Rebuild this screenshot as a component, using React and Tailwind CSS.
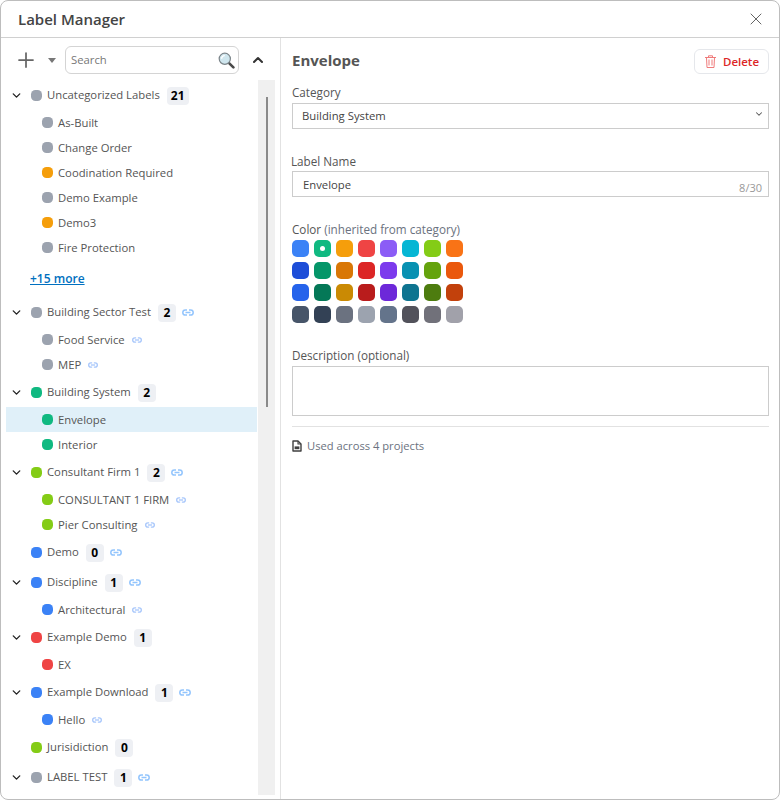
import { ChevronDown, ChevronUp, Plus, X } from "lucide-react";

const C = {
  gray: "bg-[#9ca3af]",
  amber: "bg-[#f59e0b]",
  green: "bg-[#10b981]",
  lime: "bg-[#84cc16]",
  blue: "bg-[#3b82f6]",
  red: "bg-[#ef4444]",
};

const swatches = [
  "bg-[#3b82f6]", "bg-[#10b981]", "bg-[#f59e0b]", "bg-[#ef4444]", "bg-[#8b5cf6]", "bg-[#06b6d4]", "bg-[#84cc16]", "bg-[#f97316]",
  "bg-[#1d4ed8]", "bg-[#059669]", "bg-[#d97706]", "bg-[#dc2626]", "bg-[#7c3aed]", "bg-[#0891b2]", "bg-[#65a30d]", "bg-[#ea580c]",
  "bg-[#2563eb]", "bg-[#047857]", "bg-[#ca8a04]", "bg-[#b91c1c]", "bg-[#6d28d9]", "bg-[#0e7490]", "bg-[#4d7c0f]", "bg-[#c2410c]",
  "bg-[#475569]", "bg-[#334155]", "bg-[#6b7280]", "bg-[#9ca3af]", "bg-[#64748b]", "bg-[#52525b]", "bg-[#71717a]", "bg-[#a1a1aa]",
];

function LinkIcon({ small }) {
  return (
    <svg
      width={small ? 10 : 12}
      height={small ? 6 : 7}
      viewBox="0 0 12 7"
      fill="none"
      stroke="currentColor"
      strokeWidth={small ? 1.6 : 1.5}
      className={`${small ? "ml-[7px] text-[#a9c8fb]" : "ml-[6px] text-[#93c5fd]"}`}
    >
      <path d="M5 .9H3.4a2.6 2.6 0 0 0 0 5.2H5" />
      <path d="M7 .9h1.6a2.6 2.6 0 0 1 0 5.2H7" />
      <path d="M3.5 3.5h5" />
    </svg>
  );
}

function Category({ color, name, count, linked, open = true }) {
  return (
    <div className="flex h-[30px] items-center pt-[1px]">
      <div className="flex w-[25px] pl-[4px]">
        {open && <ChevronDown size={13} strokeWidth={2.5} className="text-[#222]" />}
      </div>
      <span className={`h-[11px] w-[11px] rounded-[4.5px] ${color}`} />
      <span className="ml-[5px] text-[11.3px] text-[#555]">{name}</span>
      {count !== undefined && (
        <span className="ml-[7px] flex h-[18px] min-w-[18px] items-center justify-center rounded-[4px] bg-[#eef0f4] px-[4px] text-xs font-bold text-black">
          {count}
        </span>
      )}
      {linked && <LinkIcon />}
    </div>
  );
}

function Child({ color, name, linked, selected }) {
  return (
    <div className={`flex h-[25px] items-center pl-[36px] ${selected ? "bg-[#e0f0f9]" : ""}`}>
      <span className={`h-[11px] w-[11px] rounded-[4.5px] ${color}`} />
      <span className="ml-[5px] pt-[1px] text-[11.3px] text-[#555]">{name}</span>
      {linked && <LinkIcon small />}
    </div>
  );
}

function Tree() {
  return (
    <div className="w-[251px] shrink-0">
      <Category color={C.gray} name="Uncategorized Labels" count={21} />
      <Child color={C.gray} name="As-Built" />
      <Child color={C.gray} name="Change Order" />
      <Child color={C.amber} name="Coodination Required" />
      <Child color={C.gray} name="Demo Example" />
      <Child color={C.amber} name="Demo3" />
      <Child color={C.gray} name="Fire Protection" />
      <div className="flex h-[37px] items-center pl-[24px] text-xs font-semibold text-[#0070c0] underline">+15 more</div>
      <Category color={C.gray} name="Building Sector Test" count={2} linked />
      <Child color={C.gray} name="Food Service" linked />
      <Child color={C.gray} name="MEP" linked />
      <Category color={C.green} name="Building System" count={2} />
      <Child color={C.green} name="Envelope" selected />
      <Child color={C.green} name="Interior" />
      <Category color={C.lime} name="Consultant Firm 1" count={2} linked />
      <Child color={C.lime} name="CONSULTANT 1 FIRM" linked />
      <Child color={C.lime} name="Pier Consulting" linked />
      <Category color={C.blue} name="Demo" count={0} linked open={false} />
      <Category color={C.blue} name="Discipline" count={1} linked />
      <Child color={C.blue} name="Architectural" linked />
      <Category color={C.red} name="Example Demo" count={1} />
      <Child color={C.red} name="EX" />
      <Category color={C.blue} name="Example Download" count={1} linked />
      <Child color={C.blue} name="Hello" linked />
      <Category color={C.lime} name="Jurisidiction" count={0} open={false} />
      <Category color={C.gray} name="LABEL TEST" count={1} linked />
    </div>
  );
}

function SearchGlass() {
  return (
    <svg width="17" height="17" viewBox="0 0 17 17">
      <path d="M10.8 10.8L15.4 15.4" stroke="#4b4b4b" strokeWidth="2.6" strokeLinecap="round" />
      <circle cx="6.8" cy="6.8" r="5.6" fill="#cfe6ee" stroke="#7b8489" strokeWidth="1.2" />
      <path d="M3.6 6.8a3.2 3.2 0 0 1 3.2-3.2" fill="none" stroke="#fff" strokeWidth="1.4" />
    </svg>
  );
}

function TrashIcon() {
  return (
    <svg width="11" height="13" viewBox="0 0 11 13" fill="none" stroke="#ef7b7b" strokeWidth="1">
      <path d="M0 2.5h11M3.5 2.5V.8h4v1.7" />
      <path d="M1.5 2.5l.5 10h7l.5-10" />
      <path d="M4 4.5v6M7 4.5v6" />
    </svg>
  );
}

function DocIcon() {
  return (
    <svg width="10" height="12" viewBox="0 0 10 12" className="text-[#3f3f3f]">
      <path d="M1 1h5l3 3v7H1z" fill="#fff" stroke="currentColor" strokeWidth="1.4" strokeLinejoin="round" />
      <path d="M6 1v3h3" fill="none" stroke="currentColor" strokeWidth="1.1" />
      <path d="M2.6 6.4h4.8v2.8H2.6z" fill="currentColor" />
    </svg>
  );
}

function Field({ label, className, children }) {
  return (
    <div className={className}>
      <div className="-translate-y-px text-[11.7px] font-medium leading-[16px] text-[#555]">{label}</div>
      {children}
    </div>
  );
}

export default function App() {
  return (
    <div className="flex h-[800px] w-[780px] flex-col overflow-hidden rounded-[8px] border border-[#bdbdbd] bg-white font-['Open_Sans',sans-serif]">
      <div className="flex h-[37px] shrink-0 items-center justify-between border-b border-[#d0d0d0] pl-[17px] pr-[13px]">
        <h1 className="text-[15px] font-semibold text-[#444]">Label Manager</h1>
        <X size={20} strokeWidth={1} className="text-[#444]" />
      </div>
      <div className="flex min-h-0 flex-1">
        <div className="flex w-[280px] shrink-0 flex-col border-r border-[#e2e2e2]">
          <div className="flex h-[42px] shrink-0 items-center pl-[13px] pt-[2px]">
            <Plus size={24} strokeWidth={1.75} className="text-[#666]" />
            <span className="ml-[10px] h-0 w-0 border-x-[4px] border-t-[5px] border-x-transparent border-t-[#777]" />
            <div className="ml-[9px] flex h-[28px] w-[174px] items-center justify-between rounded-[6px] border border-[#d4d4d4] pl-[5px] pr-[3px]">
              <span className="pt-[1px] text-[11.3px] text-[#777]">Search</span>
              <SearchGlass />
            </div>
            <ChevronUp size={16} strokeWidth={3} className="ml-[11px] text-[#333]" />
          </div>
          <div className="flex min-h-0 flex-1 pb-[4px] pl-[5px]">
            <div className="h-full overflow-hidden">
              <Tree />
            </div>
            <div className="ml-[1px] h-full w-[17px] bg-[#f0f0f0] pl-[8px] pt-[17px]">
              <div className="h-[310px] w-[2px] bg-[#8a8a8a]" />
            </div>
          </div>
        </div>
        <div className="min-w-0 flex-1 pl-[11px] pr-[10px]">
          <div className="flex h-[47px] items-center justify-between">
            <h2 className="-mt-[3px] text-[15px] font-bold text-[#555]">Envelope</h2>
            <button className="flex h-[25px] w-[75px] items-center justify-center gap-[7px] rounded-[6px] border border-[#e5e7eb] pl-[1px] text-[11.5px] font-semibold text-[#dc2626]">
              <TrashIcon />
              <span className="pt-[1px]">Delete</span>
            </button>
          </div>
          <Field label="Category">
            <div className="relative mt-[2px]">
              <select className="block h-[26px] w-full appearance-none border border-[#ccc] bg-white pl-[9px] pt-[1px] text-[11.3px] text-[#444] outline-none">
                <option>Building System</option>
              </select>
              <ChevronDown size={10} strokeWidth={2.5} className="absolute right-[5px] top-[6px] text-[#555]" />
            </div>
          </Field>
          <Field label="Label Name" className="mt-[25px] -ml-[1px]">
            <div className="relative ml-[1px] mt-[1px]">
              <input readOnly value="Envelope" className="block h-[26px] w-full border border-[#ccc] pl-[10px] pt-[1px] text-[11.3px] text-[#444] outline-none" />
              <span className="absolute bottom-[1px] right-[7px] text-[11px] text-[#999]">8/30</span>
            </div>
          </Field>
          <div className="mt-[25px]">
            <div className="-translate-y-px text-[11.7px] font-medium leading-[16px] text-[#555]">
              Color <span className="text-[#6b7280]">(inherited from category)</span>
            </div>
            <div className="mt-[2px] grid w-fit grid-cols-[repeat(8,17px)] gap-[5px]">
              {swatches.map((c, i) => (
                <span key={i} className={`flex h-[17px] w-[17px] items-center justify-center rounded-[5px] ${c}`}>
                  {i === 1 && <span className="h-[5px] w-[5px] rounded-full bg-white" />}
                </span>
              ))}
            </div>
          </div>
          <Field label="Description (optional)" className="mt-[25px]">
            <textarea readOnly className="mt-[2px] block h-[50px] w-full resize-none border border-[#ccc] outline-none" />
          </Field>
          <div className="mt-[10px] border-t border-[#e2e2e2] pt-[11px]">
            <div className="flex items-center gap-[5px] text-[11.2px] text-[#6b7280]">
              <DocIcon />
              Used across 4 projects
            </div>
          </div>
        </div>
      </div>
    </div>
  );
}
